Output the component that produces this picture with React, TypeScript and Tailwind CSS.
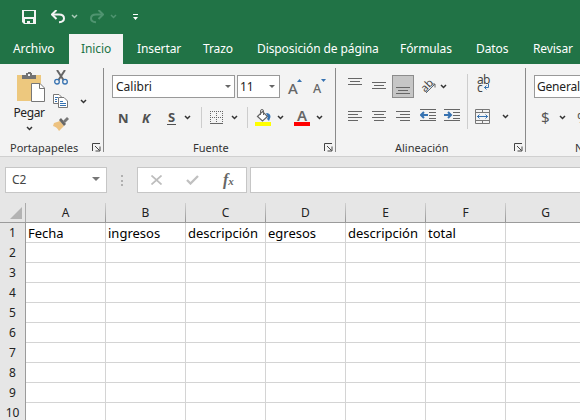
import React from "react";

const ui = "font-['Noto_Sans','Open_Sans',sans-serif]";

function Chevron({ className = "" }: { className?: string }) {
  return (
    <svg className={"h-[5px] w-[7px] shrink-0 " + className} viewBox="0 0 7 5">
      <path d="M1 1 L3.5 3.5 L6 1" fill="none" stroke="currentColor" strokeWidth="1.5" />
    </svg>
  );
}

function Triangle({ className = "" }: { className?: string }) {
  return (
    <svg className={"shrink-0 " + className} viewBox="0 0 8 4" preserveAspectRatio="none">
      <path d="M0 0H8L4 4Z" fill="currentColor" />
    </svg>
  );
}

function Launcher() {
  return (
    <svg className="h-[9px] w-[9px] shrink-0" viewBox="0 0 9 9" fill="none" stroke="#444">
      <path d="M0.5 8V0.5H8M3 3L7.5 7.5M8 3.5V8H3.5" />
    </svg>
  );
}

function Lines({ rows, className = "" }: { rows: [number, number][]; className?: string }) {
  return (
    <svg className={"h-[11px] w-[14px] shrink-0 " + className} viewBox="0 0 14 11">
      {rows.map(([x, w], i) => (
        <rect key={i} x={x} y={i * 3} width={w} height="1" fill="#666" />
      ))}
    </svg>
  );
}

function Indent({ right, className = "" }: { right?: boolean; className?: string }) {
  return (
    <svg className={"h-[12px] w-[16px] shrink-0 " + className} viewBox="0 0 16 12">
      <path d="M0 .5H16M9 3.5H16M9 6.5H16M9 9.5H16M0 11.5H16" stroke="#666" strokeWidth="1" />
      {right ? (
        <path d="M0 6H6M4 3L7 6L4 9" fill="none" stroke="#3672b1" strokeWidth="2" />
      ) : (
        <path d="M8 6H2M4 3L1 6L4 9" fill="none" stroke="#3672b1" strokeWidth="2" />
      )}
    </svg>
  );
}

const tabs: { label: string; cls: string }[] = [
  { label: "Archivo", cls: "w-[69px] pl-[13px]" },
  { label: "Inicio", cls: "w-[54px] pl-[12px] bg-[#f3f3f3] text-[#217346]" },
  { label: "Insertar", cls: "w-[67px] pl-[14px]" },
  { label: "Trazo", cls: "w-[54px] pl-[13px]" },
  { label: "Disposición de página", cls: "w-[143px] pl-[13px]" },
  { label: "Fórmulas", cls: "w-[76px] pl-[13px]" },
  { label: "Datos", cls: "w-[57px] pl-[13px]" },
  { label: "Revisar", cls: "w-[60px] pl-[13px]" },
];

function TitleBar() {
  return (
    <div className="flex h-[34px] items-start text-[#f4f4f4]">
      <svg className="ml-[22px] mt-[10px] h-[14px] w-[14px]" viewBox="0 0 14 14">
        <path fillRule="evenodd" fill="#f4f4f4" d="M0 0H14V14H2L0 12ZM2 1V7H12V1ZM3 9V13H5V11H8V13H11V9Z" />
      </svg>
      <svg className="ml-[15px] mt-[10px] h-[14px] w-[14px]" viewBox="0 0 14 14" fill="none" stroke="#f4f4f4">
        <path d="M1 4.5H8C11 4.5 13 6 13 8.5S11 12 8 12.2" strokeWidth="2" />
        <path d="M5.5 0L1 4.5L5.5 9" strokeWidth="2" />
      </svg>
      <Chevron className="ml-[6px] mt-[14px] text-[#a9cbb8]" />
      <svg className="ml-[12px] mt-[10px] h-[14px] w-[14px]" viewBox="0 0 14 14" fill="none" stroke="#4f9470">
        <path d="M13 4.5H6C3 4.5 1 6 1 8.5S3 12 6 12.2" strokeWidth="2" />
        <path d="M8.5 0L13 4.5L8.5 9" strokeWidth="2" />
      </svg>
      <Chevron className="ml-[6px] mt-[14px] text-[#4f9470]" />
      <svg className="ml-[16px] mt-[14px] h-[6px] w-[5px]" viewBox="0 0 5 6" fill="#fff">
        <path d="M0 0H5V1H0ZM0 3H5L2.5 6Z" />
      </svg>
    </div>
  );
}

function TabBar() {
  return (
    <div className="flex h-[30px] text-[12px] text-white">
      {tabs.map((t) => (
        <div key={t.label} className={"h-full shrink-0 whitespace-nowrap leading-[29px] tracking-[-0.1px] " + t.cls}>
          {t.label}
        </div>
      ))}
    </div>
  );
}

function GroupLabel({ children, className = "" }: { children: React.ReactNode; className?: string }) {
  return <div className={"whitespace-nowrap text-[11px] leading-[16px] text-[#333] " + className}>{children}</div>;
}

function Clipboard() {
  return (
    <section className="flex h-[84px] w-[104px] shrink-0 flex-col border-r border-[#8a8a8a]">
      <div className="flex h-[72px]">
        <div className="ml-[13px] flex w-[32px] flex-col items-center">
          <svg className="ml-[4px] mt-[4px] h-[30px] w-[28px] shrink-0" viewBox="0 0 28 30">
            <path d="M0 3H24V29H0Z" fill="#edc87e" />
            <path d="M5 7V3H9V1H11V0H14V1H15V3H19V7Z" fill="#737373" />
            <rect x="11" y="2" width="2" height="2" fill="#f3f3f3" />
            <path d="M14.5 11.5H23L27.5 16V29.5H14.5Z" fill="#fff" stroke="#777" />
            <path d="M22.5 11.5V16.5H27.5" fill="none" stroke="#777" />
          </svg>
          <span className="mt-[2px] text-[12px] leading-[18px] tracking-[-0.4px] text-[#222]">Pegar</span>
          <Chevron className="mt-[4px] text-[#333]" />
        </div>
        <div className="ml-[8px] flex flex-col">
          <svg className="ml-[1px] mt-[2px] h-[15px] w-[14px]" viewBox="0 0 14 15" fill="none">
            <path d="M3 0L9.5 10M11 0L4.5 10" stroke="#666" strokeWidth="2" />
            <circle cx="3" cy="11.7" r="2.3" stroke="#3672b1" strokeWidth="1.3" />
            <circle cx="11" cy="11.7" r="2.3" stroke="#3672b1" strokeWidth="1.3" />
          </svg>
          <svg className="mt-[9px] h-[14px] w-[16px]" viewBox="0 0 16 14" fill="#fff" stroke="#777">
            <path d="M.5 .5H6L8.5 3V9.5H.5Z" />
            <path d="M5.5 3.5H11L14.5 7V13.5H5.5Z" />
            <path d="M2 3.5H5M2 5.5H4M2 7.5H4M7 7.5H10M7 9.5H13M7 11.5H13" stroke="#3672b1" />
          </svg>
          <svg className="mt-[9px] h-[14px] w-[16px]" viewBox="0 0 16 14">
            <path d="M1 6L7 4L11 9L6 14Q4 10 0 9Z" fill="#edc280" />
            <path d="M6 3L8 1L13 7L11 9Z" fill="#666" />
            <path d="M10 4L14 0L16 2L12 6Z" fill="#777" />
          </svg>
        </div>
        <Chevron className="ml-[11px] mt-[31px] text-[#333]" />
      </div>
      <div className="flex h-[12px] items-end">
        <GroupLabel className="-mb-[4px] ml-[10px] w-[82px]">Portapapeles</GroupLabel>
        <Launcher />
      </div>
    </section>
  );
}

function Sep({ className = "" }: { className?: string }) {
  return <div className={"w-px shrink-0 bg-[#cdcdcd] " + className} />;
}

function FontGroup() {
  return (
    <section className="flex h-[84px] w-[232px] shrink-0 flex-col border-r border-[#8a8a8a]">
      <div className="mt-[7px] flex h-[23px] text-[12px] text-[#222]">
        <div className="ml-[8px] flex w-[123px] items-center justify-between border border-[#999] bg-white pl-[3px] pr-[3px]">
          <span>Calibri</span>
          <Triangle className="h-[3px] w-[6px] text-[#666]" />
        </div>
        <div className="ml-[2px] flex w-[43px] items-center justify-between border border-[#999] bg-white pl-[2px] pr-[4px]">
          <span>11</span>
          <Triangle className="h-[3px] w-[6px] text-[#666]" />
        </div>
        <div className="ml-[8px] flex w-[14px] items-start">
          <span className="w-[9px] text-[15px] font-medium leading-[26px] text-[#666]">A</span>
          <Triangle className="mt-[4px] h-[3px] w-[5px] rotate-180 text-[#3672b1]" />
        </div>
        <div className="ml-[11px] flex w-[14px] items-start">
          <span className="w-[8px] text-[12.5px] font-medium leading-[28px] text-[#666]">A</span>
          <Triangle className="mt-[4px] h-[3px] w-[5px] text-[#3672b1]" />
        </div>
      </div>
      <div className="mt-[9px] flex h-[21px] items-center text-[13px] font-bold leading-[20px] text-[#505050]">
        <span className="ml-[14px] w-[24px]">N</span>
        <span className="w-[25px] italic">K</span>
        <span className="w-[9px] border-b border-[#505050] text-center leading-[13px]">S</span>
        <Chevron className="ml-[8px] text-[#333]" />
        <Sep className="ml-[10px] h-[21px]" />
        <svg className="ml-[8px] h-[13px] w-[13px] shrink-0" viewBox="0 0 13 13" stroke="#666">
          <path d="M0 .5H13M.5 0V12M6.5 0V12M12.5 0V12M0 6.5H13" strokeDasharray="1 1" />
          <path d="M0 12.5H13" />
        </svg>
        <Chevron className="ml-[8px] text-[#333]" />
        <Sep className="ml-[9px] h-[21px]" />
        <svg className="ml-[7px] h-[17px] w-[16px] shrink-0" viewBox="0 0 16 17">
          <path d="M2.5 7.5L7.5 2.5L12.5 7.5L7.5 12Z" fill="#fff" stroke="#666" strokeWidth="1.2" />
          <path d="M5.5 6V2Q5.5 .5 7 .5T8.5 2V6" fill="none" stroke="#666" />
          <path d="M11 4Q15.5 4 15.5 8L14 12L12 10L13 8Z" fill="#3672b1" />
          <rect y="13" width="16" height="4" fill="#ff0" />
        </svg>
        <Chevron className="ml-[6px] text-[#333]" />
        <div className="ml-[10px] flex h-[17px] w-[16px] flex-col items-center border-b-4 border-[#f00]">
          <span className="text-[15px] font-semibold leading-[13px] text-[#666]">A</span>
        </div>
        <Chevron className="ml-[6px] text-[#333]" />
      </div>
      <div className="mt-[12px] flex h-[12px] items-end">
        <GroupLabel className="-mb-[4px] ml-[89px] w-[131px]">Fuente</GroupLabel>
        <Launcher />
      </div>
    </section>
  );
}

function AlignGroup() {
  return (
    <section className="flex h-[84px] w-[190px] shrink-0 flex-col border-r border-[#8a8a8a]">
      <div className="flex h-[72px]">
        <div className="w-[131px]">
          <div className="mt-[7px] flex h-[23px]">
            <Lines className="ml-[12px] mt-[3px]" rows={[[0, 14], [2, 10], [0, 14]]} />
            <Lines className="ml-[10px] mt-[7px]" rows={[[0, 14], [2, 10], [0, 14]]} />
            <div className="ml-[6px] flex w-[22px] border border-[#8c8c8c] bg-[#c6c6c6]">
              <Lines className="ml-[3px] mt-[11px]" rows={[[0, 14], [2, 10], [0, 14]]} />
            </div>
            <svg className="ml-[6px] mt-[3px] h-[16px] w-[17px] shrink-0" viewBox="0 0 17 16">
              <text x="1" y="13" transform="rotate(-45 5 9)" className="fill-[#444] font-['Noto_Sans'] text-[11px]">ab</text>
              <path d="M6 15L15 6M11.5 6H15V9.5" fill="none" stroke="#666" />
            </svg>
            <Chevron className="ml-[3px] mt-[9px] text-[#333]" />
          </div>
          <div className="mt-[13px] flex h-[14px]">
            <Lines className="ml-[12px]" rows={[[0, 14], [0, 10], [0, 14], [0, 10]]} />
            <Lines className="ml-[10px]" rows={[[0, 14], [2, 10], [0, 14], [2, 10]]} />
            <Lines className="ml-[10px]" rows={[[0, 14], [4, 10], [0, 14], [4, 10]]} />
            <Indent className="-mt-[2px] ml-[10px]" />
            <Indent right className="-mt-[2px] ml-[8px]" />
          </div>
        </div>
        <Sep className="mt-[6px] h-[55px]" />
        <div className="ml-[7px] mt-[7px]">
          <div className="ml-[2px] flex h-[20px] w-[13px] flex-col text-[12px] leading-[14px] text-[#444]">
            <span className="h-[8px] leading-[10px] tracking-[-0.7px]">ab</span>
            <div className="flex">
              <span className="w-[7px] leading-[9px]">c</span>
              <svg className="mt-[1px] h-[6px] w-[5px]" viewBox="0 0 5 6" fill="none" stroke="#3672b1">
                <path d="M4.5 0V3.5H.5M2.5 1.5L.5 3.5L2.5 5.5" />
              </svg>
            </div>
          </div>
          <div className="mt-[14px] flex h-[15px] items-center">
            <svg className="h-[15px] w-[15px]" viewBox="0 0 15 15" fill="none" stroke="#777">
              <path d="M.5 .5H14.5V14.5H.5ZM0 3.5H15M0 11.5H15M7.5 0V3M7.5 12V15" />
              <path d="M2 7.5H13M4.5 5.5L2.5 7.5L4.5 9.5M10.5 5.5L12.5 7.5L10.5 9.5" stroke="#3672b1" />
            </svg>
            <Chevron className="ml-[12px] text-[#333]" />
          </div>
        </div>
      </div>
      <div className="flex h-[12px] items-end">
        <GroupLabel className="-mb-[4px] ml-[59px] w-[119px]">Alineación</GroupLabel>
        <Launcher />
      </div>
    </section>
  );
}

function NumberGroup() {
  return (
    <section className="h-[84px] w-[54px] shrink-0 overflow-hidden">
      <div className="ml-[8px] mt-[7px] h-[23px] w-[80px] border border-[#999] bg-white pl-[2px] text-[12px] leading-[21px] tracking-[-0.2px] text-[#222]">
        General
      </div>
      <div className="mt-[9px] flex h-[21px] w-[80px] items-center text-[15px] leading-[21px] text-[#555]">
        <span className="ml-[15px] w-[18px]">$</span>
        <Chevron className="text-[#333]" />
        <span className="ml-[11px]">%</span>
      </div>
      <GroupLabel className="ml-[49px] mt-[12px]">Número</GroupLabel>
    </section>
  );
}

function FormulaBar() {
  return (
    <div className="flex h-[47px] border-t border-[#d0d0d0] pt-[10px]">
      <div className="ml-[5px] flex h-[26px] w-[102px] items-center justify-between border border-[#c6c6c6] bg-white pl-[6px] pr-[6px] text-[12px] text-[#444]">
        <span>C2</span>
        <Triangle className="-mt-[3px] h-[4px] w-[8px] text-[#777]" />
      </div>
      <div className="ml-[14px] mt-[8px] flex h-[11px] w-[2px] flex-col justify-between">
        <i className="h-[2px] bg-[#b0b0b0]" />
        <i className="h-[2px] bg-[#b0b0b0]" />
        <i className="h-[2px] bg-[#b0b0b0]" />
      </div>
      <div className="ml-[14px] flex h-[26px] w-[110px] items-center border border-[#c6c6c6] bg-white">
        <svg className="ml-[13px] h-[10px] w-[11px]" viewBox="0 0 11 10">
          <path d="M.5 .5L10.5 9.5M10.5 .5L.5 9.5" stroke="#bdbdbd" strokeWidth="1.7" />
        </svg>
        <svg className="ml-[24px] h-[10px] w-[13px]" viewBox="0 0 13 10">
          <path d="M1 5L4.5 8.5L12 1" fill="none" stroke="#c0c0c0" strokeWidth="2.3" />
        </svg>
        <span className="ml-[24px] font-['Liberation_Serif',serif] text-[16px] font-bold italic leading-[16px] text-[#666]">
          f<span className="text-[11px]">x</span>
        </span>
      </div>
      <div className="ml-[3px] h-[26px] flex-1 border border-r-0 border-[#c6c6c6] bg-white" />
    </div>
  );
}

const columns = ["A", "B", "C", "D", "E", "F", "G"];
const firstRow = ["Fecha", "ingresos", "descripción", "egresos", "descripción", "total", ""];
const rows = [1, 2, 3, 4, 5, 6, 7, 8, 9, 10];

function Sheet() {
  return (
    <div className="w-[586px] text-[13px] text-black">
      <div className="flex h-[20px] border-b border-[#9b9b9b]">
        <div className="flex w-[26px] shrink-0 border-r border-[#ababab] pl-[10px] pt-[4px]">
          <svg className="h-[12px] w-[12px]" viewBox="0 0 12 12">
            <path d="M12 0V12H0Z" fill="#b3b3b3" />
          </svg>
        </div>
        {columns.map((c) => (
          <div key={c} className="flex w-[80px] shrink-0">
            <span className="flex-1 text-center text-[12px] leading-[20px] text-[#222]">{c}</span>
            <i className="w-px bg-linear-to-b from-[#d0d0d0] to-[#969696]" />
          </div>
        ))}
      </div>
      {rows.map((r) => (
        <div key={r} className="flex h-[20px]">
          <div className="flex w-[26px] shrink-0 flex-col border-r border-[#9b9b9b]">
            <span className="flex-1 text-center text-[12px] leading-[20px] text-[#222]">{r}</span>
            <i className="h-px bg-linear-to-r from-[#d4d4d4] to-[#a0a0a0]" />
          </div>
          {firstRow.map((v, i) => (
            <div key={i} className="w-[80px] shrink-0 whitespace-nowrap border-b border-r border-[#d4d4d4] bg-white pl-[2px] leading-[20px]">
              {r === 1 ? v : ""}
            </div>
          ))}
        </div>
      ))}
    </div>
  );
}

export default function App() {
  return (
    <div className={"h-[420px] w-[580px] overflow-hidden bg-[#e6e6e6] " + ui}>
      <header className="bg-[#217346]">
        <TitleBar />
        <TabBar />
      </header>
      <div className="flex h-[92px] bg-[#f3f3f3] pt-[4px]">
        <Clipboard />
        <FontGroup />
        <AlignGroup />
        <NumberGroup />
      </div>
      <FormulaBar />
      <Sheet />
    </div>
  );
}
